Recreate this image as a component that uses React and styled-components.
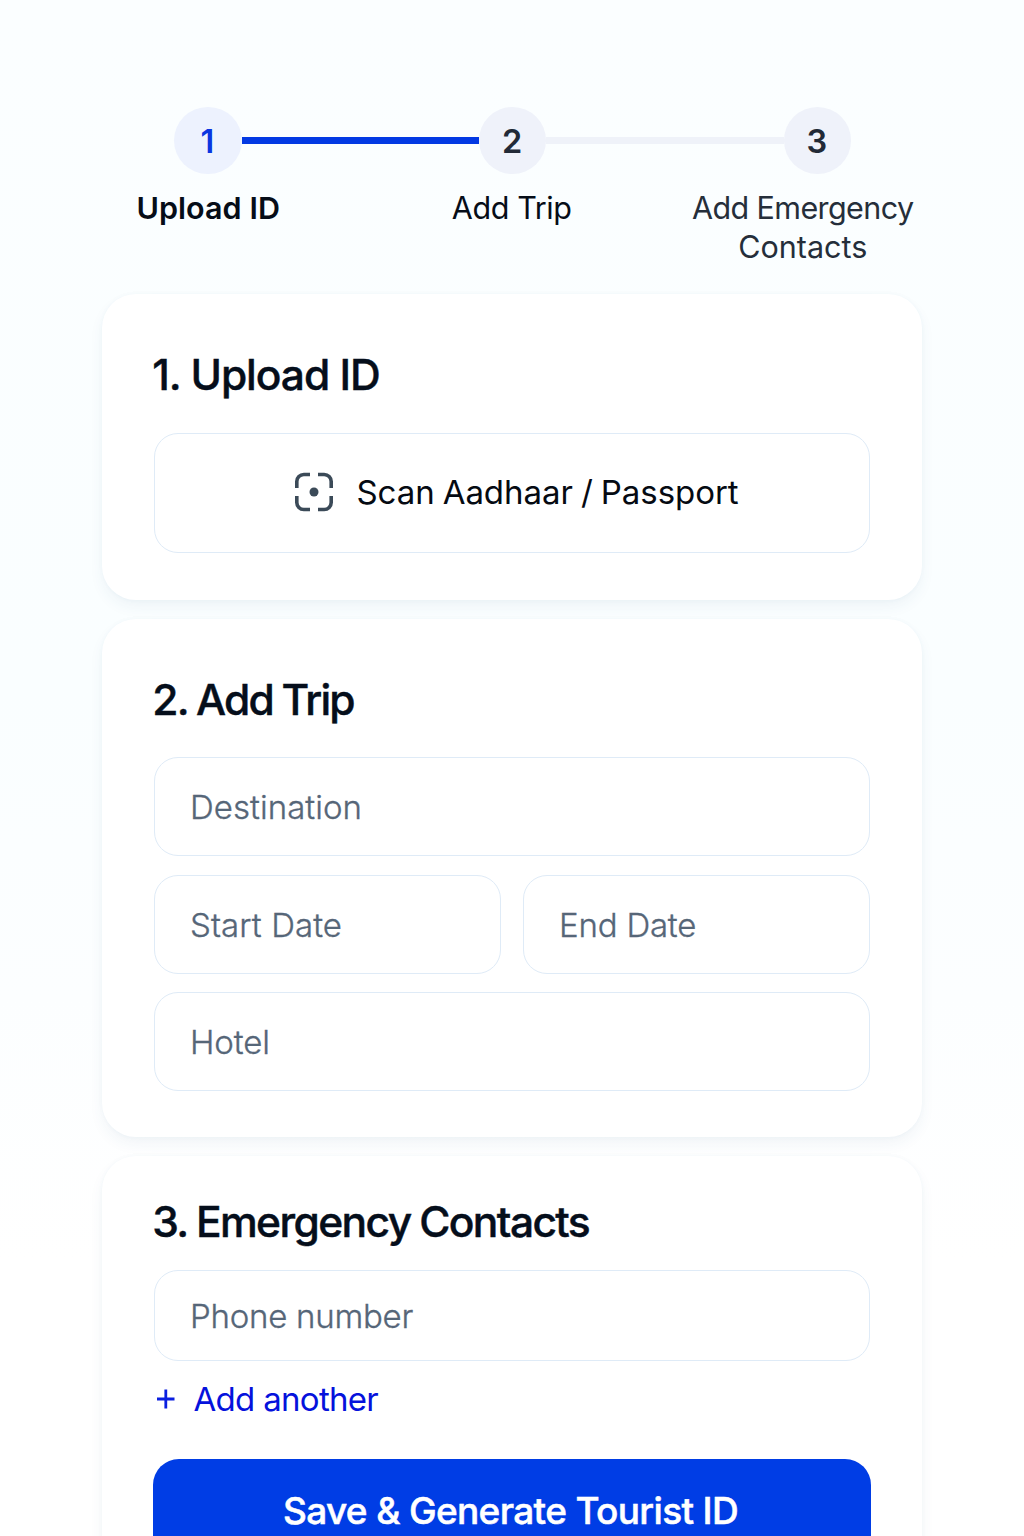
import React from 'react';
import styled, { createGlobalStyle } from 'styled-components';

const GlobalStyle = createGlobalStyle`
  *, *::before, *::after { box-sizing: border-box; }
  html, body { margin: 0; padding: 0; }
  body {
    font-family: Inter, "Liberation Sans", sans-serif;
    color: #050d18;
  }
`;

const Page = styled.main`
  height: 1536px;
  overflow: hidden;
  padding-top: 107px;
  background:
    linear-gradient(180deg, #fbfeff 0%, #fafeff 45%, #fcfeff 65%, #ffffff 82%);
`;

const StepTrack = styled.div`
  display: flex;
  align-items: center;
  width: 677px;
  margin-left: 174px;
`;

const StepCircle = styled.div`
  width: 67.5px;
  height: 67px;
  flex: none;
  border-radius: 50%;
  display: flex;
  align-items: center;
  justify-content: center;
  padding: 3px 1px 0 0;
  font-size: 32.5px;
  font-weight: 600;
  line-height: 1;
  background: ${(p) => (p.$active ? '#edf2fe' : '#eff2fa')};
  color: ${(p) => (p.$active ? '#0a35e0' : '#222a37')};
`;

const Connector = styled.div`
  flex: 1;
  height: 7px;
  background: ${(p) => (p.$done ? '#0339e3' : '#eff2f9')};
`;

const StepLabels = styled.div`
  display: grid;
  grid-template-columns: repeat(3, 304.5px);
  width: 913.5px;
  height: 77px;
  margin: 15px 0 0 56px;
`;

const StepLabel = styled.div`
  text-align: center;
  font-size: 30.5px;
  line-height: 38.5px;
  font-weight: ${(p) => p.$weight || 400};
  letter-spacing: ${(p) => p.$track || '0'};
  color: ${(p) => p.$color || '#060d18'};
  margin-left: ${(p) => p.$shift || '0'};
`;

const LabelLine = styled.span`
  display: block;
  letter-spacing: ${(p) => p.$track || '0'};
`;

const Cards = styled.div`
  display: flex;
  flex-direction: column;
  gap: 19px;
  width: 820px;
  margin: 28px auto 0;
`;

const Card = styled.section`
  height: ${(p) => p.$height};
  padding: ${(p) => p.$top} 52px 0;
  border-radius: 34px;
  background: #fff;
  box-shadow: 0 7px 16px -2px rgba(40, 80, 130, 0.07), 0 0 4px rgba(60, 120, 170, 0.04);
`;

const Title = styled.h2`
  margin: 0 0 0 -1.8px;
  font-size: 42.5px;
  line-height: 52px;
  font-weight: 500;
  -webkit-text-stroke: 0.45px currentColor;
  letter-spacing: ${(p) => p.$track};
  word-spacing: ${(p) => p.$words || '0'};
  color: #050e1b;
`;

const Fields = styled.div`
  display: grid;
  grid-template-columns: 1fr 1fr;
  gap: 18.5px 22px;
  margin-top: ${(p) => p.$top};
`;

const Field = styled.div`
  grid-column: ${(p) => (p.$half ? 'auto' : '1 / -1')};
  height: ${(p) => p.$height || '99px'};
  padding: 1px 0 0 35px;
  border: 1.5px solid #dfebf7;
  border-radius: 24px;
  display: flex;
  align-items: center;
  font-size: 33px;
  line-height: 40px;
  font-weight: 300;
  -webkit-text-stroke: 0.35px currentColor;
  letter-spacing: ${(p) => p.$track || '0'};
  color: #566678;
`;

const ScanButton = styled.button`
  width: 100%;
  height: 120px;
  margin-top: 32px;
  padding: 0 0 2px 8.5px;
  border: 1.5px solid #dfebf7;
  border-radius: 24px;
  background: #fff;
  display: flex;
  align-items: center;
  justify-content: center;
  gap: 22.5px;
  font: 400 33px/40px Inter, "Liberation Sans", sans-serif;
  letter-spacing: -0.06px;
  word-spacing: -1.1px;
  color: #050a12;
`;

const AddAnother = styled.button`
  display: flex;
  align-items: center;
  gap: 18.5px;
  margin-top: 18px;
  padding: 0 0 0 3px;
  border: 0;
  background: none;
  font: 400 33px/40px Inter, "Liberation Sans", sans-serif;
  letter-spacing: -0.7px;
  color: #0512dc;
`;

const SaveButton = styled.button`
  width: 718px;
  height: 104px;
  margin: 40px 0 0 -1px;
  padding: 0 3px 0 0;
  border: 0;
  border-radius: 26px;
  background: #003de5;
  color: #fff;
  font: 500 37px/44px Inter, "Liberation Sans", sans-serif;
  -webkit-text-stroke: 0.5px currentColor;
  letter-spacing: -0.65px;
`;

const ScanIcon = () => (
  <svg width="40" height="40" viewBox="0 0 40 40" fill="none" stroke="#3b4a58" strokeWidth="3.6">
    <path d="M2.8 16V9.5a7 7 0 0 1 7-7H16M24 2.5h6.2a7 7 0 0 1 7 7V16M37.2 24v6.5a7 7 0 0 1-7 7H24M16 37.500H9.800a7 7 0 0 1-7-7V24" />
    <circle cx="20" cy="20" r="4.500" fill="#3b4a58" stroke="none" />
  </svg>
);

const PlusIcon = () => (
  <svg width="18" height="20" viewBox="0 0 18 20" stroke="#0a1fe0" strokeWidth="2.800">
    <path d="M0 10H17.500M8.800 0.500V19.500" />
  </svg>
);

export default function App() {
  return (
    <>
      <GlobalStyle />
      <Page>
        <StepTrack>
          <StepCircle $active>1</StepCircle>
          <Connector $done />
          <StepCircle>2</StepCircle>
          <Connector />
          <StepCircle>3</StepCircle>
        </StepTrack>
        <StepLabels>
          <StepLabel $weight={600} $track="0.05px">Upload ID</StepLabel>
          <StepLabel $track="-0.4px" $shift="-2px">Add Trip</StepLabel>
          <StepLabel $color="#252e3a" $shift="-29px">
            <LabelLine $track="-0.6px">Add Emergency</LabelLine>
            <LabelLine>Contacts</LabelLine>
          </StepLabel>
        </StepLabels>

        <Cards>
          <Card $height="306px" $top="55px">
            <Title $track="-1.05px">1. Upload ID</Title>
            <ScanButton>
              <ScanIcon />
              <span>Scan Aadhaar / Passport</span>
            </ScanButton>
          </Card>

          <Card $height="518px" $top="55px">
            <Title $track="-1.75px" $words="-1px">2. Add Trip</Title>
            <Fields $top="31px">
              <Field $track="0.05px">Destination</Field>
              <Field $half $track="0.1px">Start Date</Field>
              <Field $half $track="-0.2px">End Date</Field>
              <Field $track="-0.1px">Hotel</Field>
            </Fields>
          </Card>

          <Card $height="480px" $top="40px">
            <Title $track="-1.6px" $words="-1px">3. Emergency Contacts</Title>
            <Fields $top="22px">
              <Field $height="91px" $track="-0.25px">Phone number</Field>
            </Fields>
            <AddAnother>
              <PlusIcon />
              <span>Add another</span>
            </AddAnother>
            <SaveButton>Save &amp; Generate Tourist ID</SaveButton>
          </Card>
        </Cards>
      </Page>
    </>
  );
}
